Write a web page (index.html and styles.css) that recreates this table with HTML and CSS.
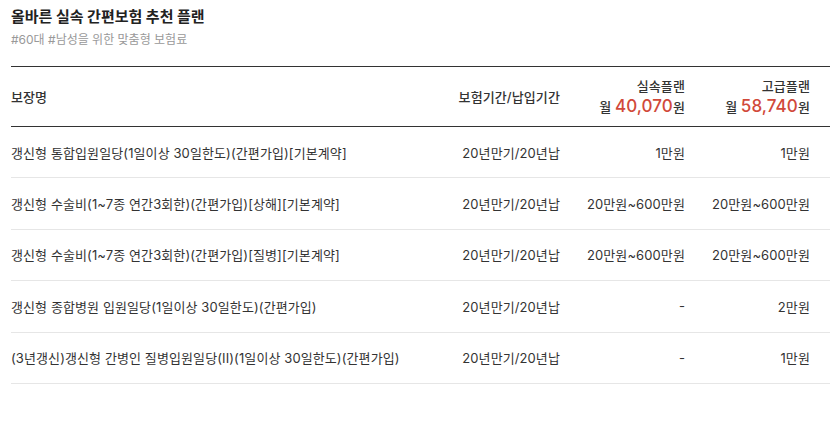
FILE: index.html
```html
<!DOCTYPE html>
<html lang="ko">
<head>
  <meta charset="UTF-8">
  <title>올바른 실속 간편보험 추천 플랜</title>
  <link rel="stylesheet" href="styles.css">
</head>
<body>
  <div class="wrap">
    <h1 class="title">올바른 실속 간편보험 추천 플랜</h1>
    <p class="tags">#60대 #남성을 위한 맞춤형 보험료</p>

    <!-- 보장 비교표 -->
    <div class="table">
      <div class="row head">
        <div class="cell name">보장명</div>
        <div class="cell">보험기간/납입기간</div>
        <div class="cell plan">
          <span>실속플랜</span>
          <span class="price">월 <b>40,070</b>원</span>
        </div>
        <div class="cell plan">
          <span>고급플랜</span>
          <span class="price">월 <b>58,740</b>원</span>
        </div>
      </div>

      <div class="row">
        <div class="cell name">갱신형 통합입원일당(1일이상 30일한도)(간편가입)[기본계약]</div>
        <div class="cell">20년만기/20년납</div>
        <div class="cell">1만원</div>
        <div class="cell">1만원</div>
      </div>
      <div class="row">
        <div class="cell name">갱신형 수술비(1~7종 연간3회한)(간편가입)[상해][기본계약]</div>
        <div class="cell">20년만기/20년납</div>
        <div class="cell">20만원~600만원</div>
        <div class="cell">20만원~600만원</div>
      </div>
      <div class="row">
        <div class="cell name">갱신형 수술비(1~7종 연간3회한)(간편가입)[질병][기본계약]</div>
        <div class="cell">20년만기/20년납</div>
        <div class="cell">20만원~600만원</div>
        <div class="cell">20만원~600만원</div>
      </div>
      <div class="row">
        <div class="cell name">갱신형 종합병원 입원일당(1일이상 30일한도)(간편가입)</div>
        <div class="cell">20년만기/20년납</div>
        <div class="cell">-</div>
        <div class="cell">2만원</div>
      </div>
      <div class="row">
        <div class="cell name">(3년갱신)갱신형 간병인 질병입원일당(II)(1일이상 30일한도)(간편가입)</div>
        <div class="cell">20년만기/20년납</div>
        <div class="cell">-</div>
        <div class="cell">1만원</div>
      </div>
    </div>
  </div>
</body>
</html>
```

FILE: styles.css
```css
body {
  margin: 0;
  font-family: Inter, "Noto Sans CJK KR", "Noto Sans", sans-serif;
  color: #333;
  background: #fff;
}
.wrap {
  padding: 7px 4px 0 11px;
}
.title {
  margin: 0;
  font-size: 15px;
  line-height: 20px;
  font-weight: 700;
  color: #222;
}
.tags {
  margin: 4px 0 0;
  font-size: 12px;
  line-height: 18px;
  color: #999;
}
.table {
  margin-top: 17px;
  border-top: 1px solid #333;
}
.row {
  display: grid;
  grid-template-columns: 1fr 125px 125px 125px;
  height: 50.4px;
  align-items: center;
  border-bottom: 1px solid #e6e6e6;
  font-size: 13px;
  letter-spacing: 0.1px;
}
.row.head {
  height: 59px;
  border-bottom: 1px solid #333;
  font-weight: 500;
}
.cell {
  text-align: right;
  padding-right: 20px;
  white-space: nowrap;
}
.cell.name {
  text-align: left;
}
.plan {
  display: flex;
  flex-direction: column;
  align-items: flex-end;
  line-height: 20px;
}
.price b {
  font-size: 17px;
  font-weight: 500;
  color: #d1493a;
}
```
